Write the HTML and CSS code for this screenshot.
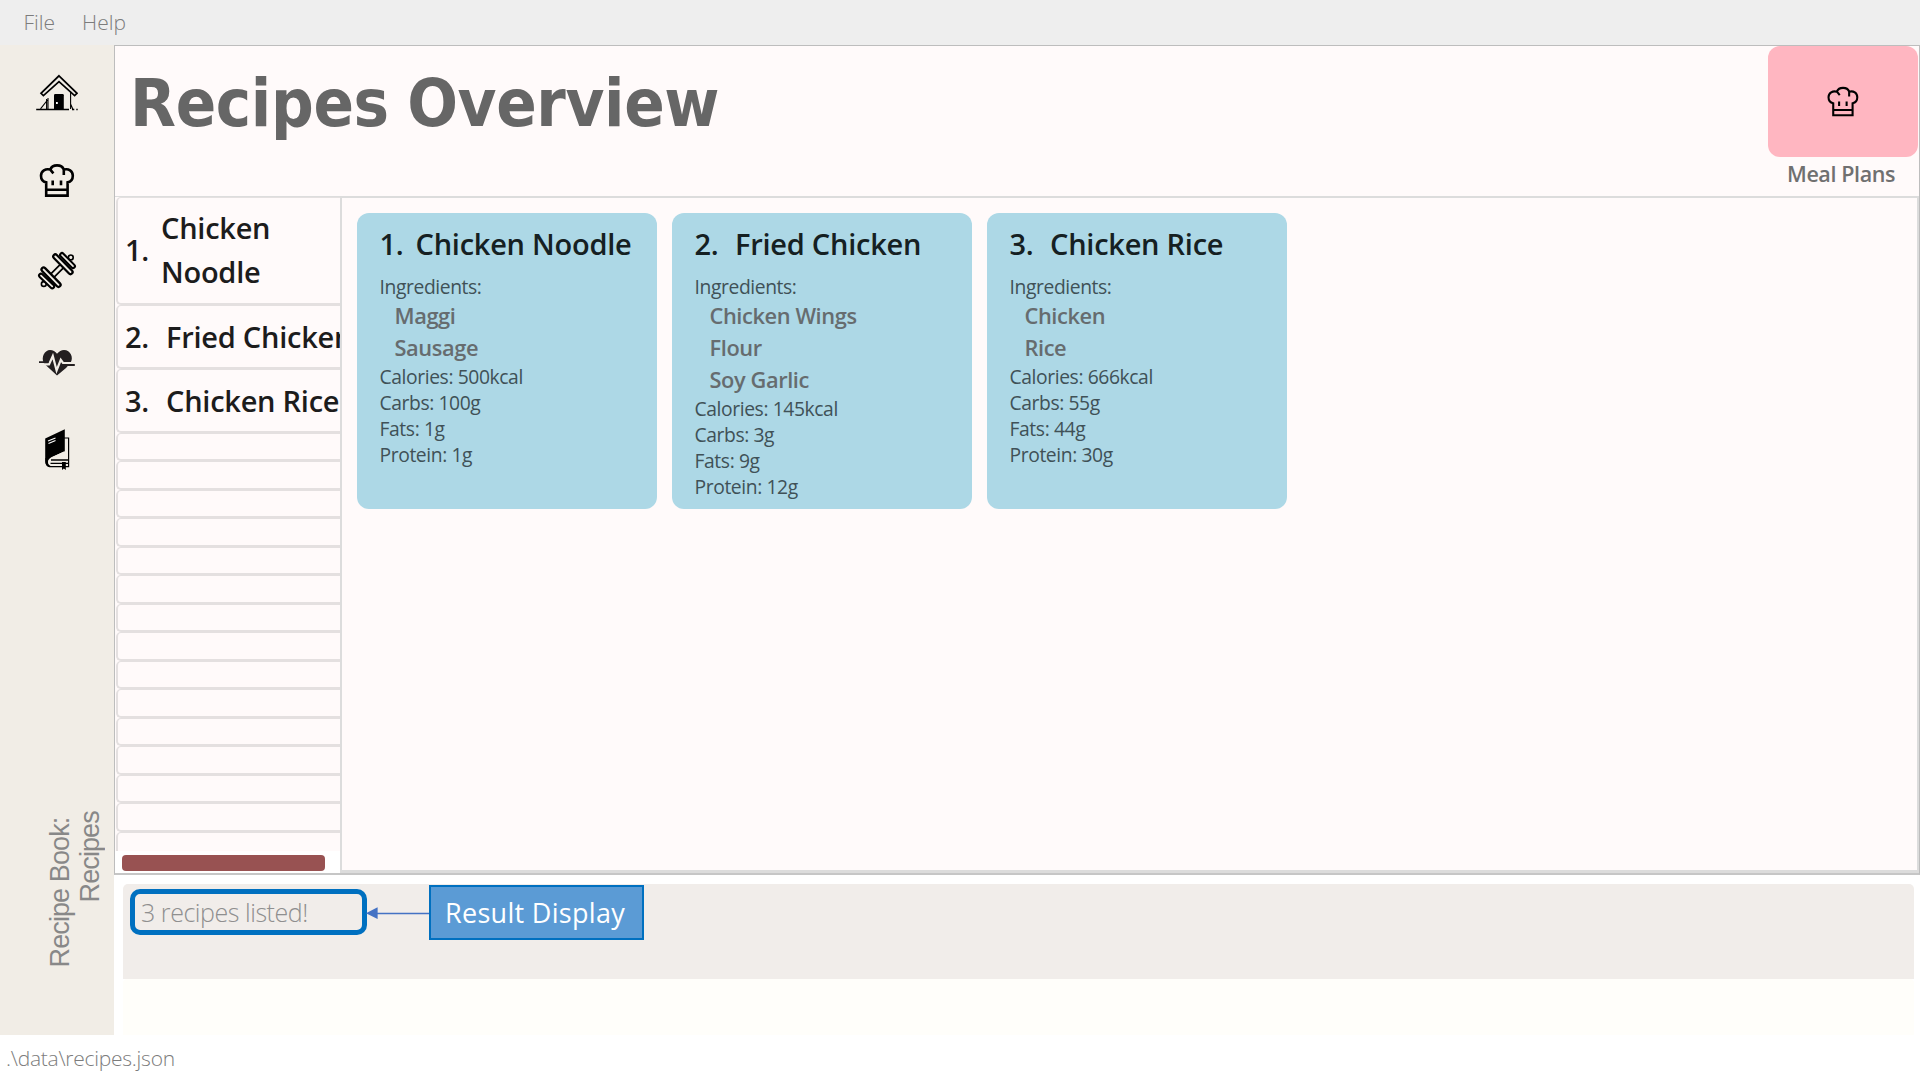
FILE: index.html
```html
<!DOCTYPE html>
<html lang="en">
<head>
<meta charset="utf-8">
<title>Recipe Book</title>
<link rel="stylesheet" href="styles.css">
</head>
<body>
<svg class="sprite" aria-hidden="true">
  <symbol id="chef" viewBox="0 0 42 42">
    <path d="M10.2 22.4C6.600 21.700 5 18.800 5 15.800C5 11 9.600 8.200 14.300 9.600C16.300 4 25.800 4 27.800 9.600C32.600 8.200 36.800 11 36.800 15.800C36.800 18.800 35.200 21.700 31.600 22.400V35.600H10.200Z M10.200 29.800H31.600 M14.300 9.600L17.400 13.400 M27.800 9.600V15 M16.700 20.500V25.300 M25 20.500V25.300" fill="none" stroke="currentColor"/>
  </symbol>
</svg>
<div class="app">
  <nav class="menubar"><span>File</span><span>Help</span></nav>
  <div class="body">
    <aside class="sidebar">
      <div class="icons">
        <svg viewBox="0 0 42 42"><path d="M23 3.8L41 21.3L38.6 23.7L23 9.6L7.4 23.7L5 21.3Z" fill="#f1ede6" stroke="#000" stroke-width="1.7"/><path d="M12 26V37M10.6 27V37M4.5 36.8L11.5 28M34.6 19.5V37M34.6 32L37 37.5" fill="none" stroke="#000" stroke-width="1.1"/><path d="M18 23.2Q18 22 19.2 22H26.6Q27.8 22 27.8 23.2V38H18Z"/><path d="M20 30h1.8v2H20z" fill="#fff"/><path d="M.2 37.6H33M36 37.6h2.3M40.3 37.6h1.4" stroke="#000" stroke-width="1.5"/></svg>
        <svg class="chef"><use href="#chef"/></svg>
        <svg viewBox="0 0 42 42" fill="none" stroke-linecap="round"><circle cx="34.8" cy="7.4" r="2.4" stroke="#000" stroke-width="1.6"/><circle cx="7.8" cy="34" r="2.4" stroke="#000" stroke-width="1.6"/><path d="M15 27L27 15" stroke="#000" stroke-width="6.4"/><path d="M15 27L27 15" stroke="#f1ede6" stroke-width="3"/><path d="M26 5L37 16.2M5 25.6L16.2 36.4" stroke="#000" stroke-width="5.9"/><path d="M26 5L37 16.2M5 25.6L16.2 36.4" stroke="#f1ede6" stroke-width="1.7"/><path d="M19.3 6.5L34.5 22M7.6 19.6L22.5 34.8" stroke="#000" stroke-width="6.4"/><path d="M19.3 6.5L34.5 22M7.6 19.6L22.5 34.8" stroke="#f1ede6" stroke-width="1.9"/></svg>
        <svg viewBox="0 0 42 42"><path d="M21 35.5L8 23.5C4.5 17 9 10 14 10Q18.5 10 21 13.8Q24 10 28 10C34.5 10 38 17.5 34.5 23L30 28Z" fill="#231f20"/><path d="M5 24.4H13L16.8 16L20.6 30.5L24.8 19.8L27.2 23.2H37" fill="none" stroke="#f1ede6" stroke-width="2.2"/><path d="M3 22.2H12.5M26 25H38.8" stroke="#231f20" stroke-width="1.8"/></svg>
        <svg viewBox="0 0 42 42"><path d="M28 9H32.6V37.6H14Q10 37 10 33V29" fill="#f1ede6" stroke="#000" stroke-width="1.2"/><path d="M9.2 9.4L28.8 .3V22.2L16 28Q12 30 12 33Q12 36 15 37L13.5 38.3Q9.2 37 9.2 32Z"/><path d="M28.3 23L16 28.8Q12.5 31 13 33.5Q13.5 36 16 36.2" fill="none" stroke="#f1ede6" stroke-width="1.2"/><path d="M15 31H32.5M14.5 34.3H32.5" stroke="#000" stroke-width="1.3"/><path d="M26 33H29.8V41L27.9 39.5L26 41Z"/><path d="M12 12L19.5 9M12.5 14.5L19.5 11.5" stroke="#fff" stroke-width="1.1"/></svg>
      </div>
      <div class="book"><span>Recipe Book:&nbsp;</span><span>Recipes</span></div>
    </aside>
    <main class="main">
      <section class="panel">
        <header class="head">
          <h1>Recipes Overview</h1>
          <div class="meal"><div class="tile"><svg class="chef thin"><use href="#chef"/></svg></div><span>Meal Plans</span></div>
        </header>
        <div class="content">
          <div class="list">
            <div class="rows">
              <div class="row tall"><span class="n">1.</span><span class="name">Chicken<br>Noodle</span></div>
              <div class="row item"><span class="n">2.</span><span class="name">Fried Chicken</span></div>
              <div class="row item"><span class="n">3.</span><span class="name">Chicken Rice</span></div>
              <div class="row"></div><div class="row"></div><div class="row"></div><div class="row"></div><div class="row"></div>
              <div class="row"></div><div class="row"></div><div class="row"></div><div class="row"></div><div class="row"></div>
              <div class="row"></div><div class="row"></div><div class="row"></div><div class="row"></div><div class="row"></div>
            </div>
            <div class="scroll"><div class="thumb"></div></div>
          </div>
          <div class="cards">
            <article class="card">
              <h2><span class="one">1.</span>Chicken Noodle</h2>
              <p>Ingredients:</p>
              <ul><li>Maggi</li><li>Sausage</li></ul>
              <p>Calories: 500kcal</p><p>Carbs: 100g</p><p>Fats: 1g</p><p>Protein: 1g</p>
            </article>
            <article class="card">
              <h2><span>2.</span>Fried Chicken</h2>
              <p>Ingredients:</p>
              <ul><li>Chicken Wings</li><li>Flour</li><li>Soy Garlic</li></ul>
              <p>Calories: 145kcal</p><p>Carbs: 3g</p><p>Fats: 9g</p><p>Protein: 12g</p>
            </article>
            <article class="card">
              <h2><span>3.</span>Chicken Rice</h2>
              <p>Ingredients:</p>
              <ul><li>Chicken</li><li>Rice</li></ul>
              <p>Calories: 666kcal</p><p>Carbs: 55g</p><p>Fats: 44g</p><p>Protein: 30g</p>
            </article>
          </div>
        </div>
      </section>
      <section class="bottom">
        <div class="result">
          <div class="message">3 recipes listed!</div>
          <svg class="arrow" viewBox="0 0 63 12"><path d="M10 6.5H63" stroke="#4472c4" stroke-width="1.3"/><path d="M0 6.2L11.6 .2V12Z" fill="#4472c4"/></svg>
          <div class="callout">Result Display</div>
        </div>
      </section>
    </main>
  </div>
  <footer class="status">.\data\recipes.json</footer>
</div>
</body>
</html>
```
FILE: styles.css
```css
* { box-sizing: border-box; margin: 0; padding: 0; }
body { width: 1924px; height: 1080px; overflow: hidden; background: #fff; font-family: "Open Sans", "Noto Sans", sans-serif; }
.sprite { display: none; }
.app { width: 1920px; height: 1080px; display: flex; flex-direction: column; }
.menubar { height: 45px; flex: none; background: #eee; display: flex; gap: 27px; padding-left: 23.5px; font-size: 21px; font-weight: 300; line-height: 44px; color: #7c7c7c; }
.body { height: 990px; flex: none; display: flex; }

.sidebar { width: 114px; flex: none; background: #f1ede6; display: flex; flex-direction: column; justify-content: space-between; padding: 27px 0 68px 36px; }
.icons { display: flex; flex-direction: column; gap: 47.3px; }
.icons svg { display: block; width: 42px; height: 42px; }
.icons svg:nth-child(2), .icons svg:nth-child(3) { margin-top: -1px; margin-bottom: 1px; }
.chef { color: #000; stroke-width: 2.6; }
.book { align-self: flex-start; margin-left: 9px; writing-mode: vertical-rl; transform: rotate(180deg); display: flex; flex-direction: column; align-items: flex-end; font: 27px/30px "Liberation Sans", Arial, sans-serif; letter-spacing: -0.9px; color: #888; }
.book span { display: block; }

.main { flex: 1; display: flex; flex-direction: column; min-width: 0; }
.panel { height: 830px; flex: none; border: 1px solid #bdbdbd; border-bottom: 2px solid #c6c6c6; background: #fffafa; display: flex; flex-direction: column; }
.head { height: 150px; flex: none; display: flex; justify-content: space-between; padding-right: 1px; }
h1 { padding-left: 15px; font: bold 66.4px/114px "DejaVu Sans Condensed", "DejaVu Sans", sans-serif; font-stretch: condensed; letter-spacing: -0.35px; word-spacing: -2px; color: #666; }
.meal { width: 150px; text-align: center; font-size: 21.5px; font-weight: 600; line-height: 33px; letter-spacing: -0.4px; color: #707070; }
.meal span { display: block; padding-right: 4px; }
.tile { height: 111px; border-radius: 12px; background: #ffb6c1; display: flex; align-items: center; justify-content: center; }
.thin { width: 38px; height: 38px; stroke-width: 2.3; }

.content { flex: 1; display: flex; min-height: 0; }
.list { width: 225px; flex: none; overflow: hidden; display: flex; flex-direction: column; }
.rows { height: 655px; padding-left: 1px; overflow: hidden; border-top: 1px solid #ddd; }
.row { height: 28.54px; border: 2px solid #e4e0e0; border-top-width: 1px; border-right: 0; border-radius: 5px 0 0 5px; display: flex; align-items: center; white-space: nowrap; font-size: 29px; font-weight: 600; letter-spacing: -0.25px; color: #1c1c1c; }
.row .n { width: 41px; margin-left: 7px; flex: none; }
.row.tall { height: 107.5px; line-height: 44.5px; }
.row.tall .n { width: 36px; }
.row.item { height: 64px; }
.scroll { flex: 1; background: #fff; padding: 4px 0 0 7px; }
.thumb { width: 203px; height: 16px; border-radius: 4px; background: #985252; }

.cards { flex: 1; border: 2px solid #dcdcdc; border-bottom-width: 3px; padding: 15px; display: flex; align-items: flex-start; gap: 15px; }
.card { flex: none; width: 300px; height: 296px; border-radius: 12px; background: #add8e6; padding: 11px 0 0 22.5px; white-space: nowrap; }
h2 { font-size: 29px; font-weight: 600; line-height: 40px; letter-spacing: -0.25px; color: #152022; margin-bottom: 10px; }
h2 span { display: inline-block; width: 40.5px; }
h2 .one { width: 36px; }
.card p { font-size: 19.3px; line-height: 26.1px; letter-spacing: -0.4px; color: #405157; }
.card ul { list-style: none; padding-left: 15px; font-size: 21.8px; font-weight: 600; line-height: 32px; letter-spacing: -0.4px; color: #666c6f; }

.bottom { flex: 1; padding: 9px 6px 0 9px; background: #fff; display: flex; flex-direction: column; }
.bottom::after { content: ""; flex: 1; background: #fffefa; border-radius: 4px 4px 0 0; }
.result { height: 95px; background: #f1edea; border-radius: 5px 5px 0 0; display: flex; align-items: flex-start; padding: 1px 0 0 7px; }
.message { width: 237px; height: 46px; margin-top: 4px; border: 5px solid #0070c0; border-radius: 10px; padding-left: 6px; font-size: 25px; font-weight: 300; line-height: 36px; letter-spacing: -0.45px; color: #8f8f8f; }
.arrow { width: 63px; height: 12px; margin: 22px 0 0 -1px; flex: none; }
.callout { width: 215px; height: 55px; border: 2px solid #0070c0; background: #5b9bd5; color: #fff; font-size: 27px; line-height: 52px; letter-spacing: 0.3px; text-align: center; padding-right: 3px; }
.status { flex: 1; padding-left: 6px; font-size: 21px; font-weight: 300; line-height: 46px; letter-spacing: -0.25px; color: #7c7c7c; }
```
